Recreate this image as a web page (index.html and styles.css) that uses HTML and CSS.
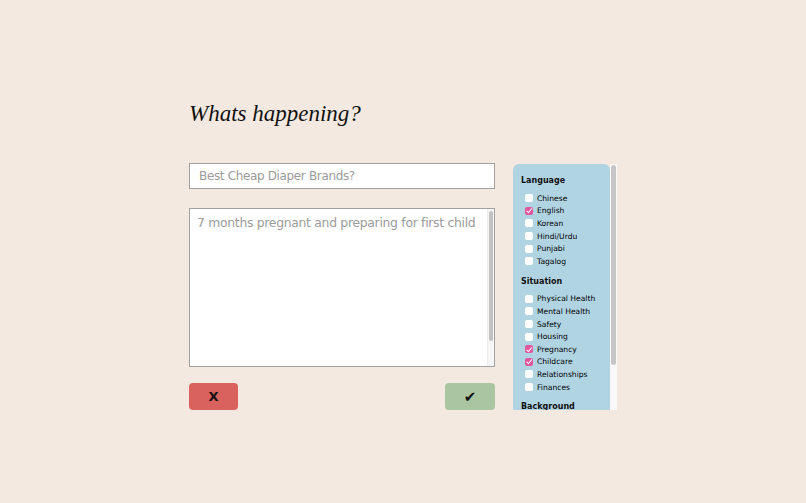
FILE: index.html
```html
<!DOCTYPE html>
<html lang="en">
  <head>
    <meta charset="UTF-8" />
    <meta name="viewport" content="width=device-width, initial-scale=1.0" />
    <title>Whats happening?</title>
    <link rel="stylesheet" href="styles.css">
  </head>
  <body>
    <div class="page">
      <h1 class="title">Whats happening?</h1>
      <div class="row">
        <div class="form">
          <input class="subject" type="text" placeholder="Best Cheap Diaper Brands?" />
          <div class="details-box">
            <textarea class="details" placeholder="7 months pregnant and preparing for first child"></textarea>
            <div class="bar"><div class="thumb"></div></div>
          </div>
          <div class="actions">
            <button class="btn cancel">X</button>
            <button class="btn ok">&#10004;</button>
          </div>
        </div>
        <div class="filters">
          <div class="panel">
            <div class="group-title">Language</div>
            <label class="opt"><input type="checkbox" />Chinese</label>
            <label class="opt"><input type="checkbox" checked />English</label>
            <label class="opt"><input type="checkbox" />Korean</label>
            <label class="opt"><input type="checkbox" />Hindi/Urdu</label>
            <label class="opt"><input type="checkbox" />Punjabi</label>
            <label class="opt"><input type="checkbox" />Tagalog</label>

            <div class="group-title">Situation</div>
            <label class="opt"><input type="checkbox" />Physical Health</label>
            <label class="opt"><input type="checkbox" />Mental Health</label>
            <label class="opt"><input type="checkbox" />Safety</label>
            <label class="opt"><input type="checkbox" />Housing</label>
            <label class="opt"><input type="checkbox" checked />Pregnancy</label>
            <label class="opt"><input type="checkbox" checked />Childcare</label>
            <label class="opt"><input type="checkbox" />Relationships</label>
            <label class="opt"><input type="checkbox" />Finances</label>

            <div class="group-title">Background</div>
          </div>
          <div class="bar side"><div class="thumb"></div></div>
        </div>
      </div>
    </div>
  </body>
</html>
```

FILE: styles.css
```css
:root {
  --fondo: #f4e9e0;
  --panel: #b1d4e3;
  --rosa: #e2559f;
  --borde: #a3a09e;
}

body {
  margin: 0;
  background-color: var(--fondo);
  font-family: "DejaVu Sans", Verdana, sans-serif;
  height: 100vh;
}

.page {
  width: 428px;
  margin: 0 auto;
  padding-top: 100px;
}

.title {
  margin: 0 0 35px 0;
  font-family: "Liberation Serif", "Times New Roman", serif;
  font-style: italic;
  font-weight: normal;
  font-size: 23px;
  line-height: 28px;
  color: #111;
}

.row {
  display: flex;
  gap: 18px;
  align-items: flex-start;
}

.form {
  width: 306px;
  display: flex;
  flex-direction: column;
}

.subject {
  box-sizing: border-box;
  height: 26px;
  width: 100%;
  margin: 0;
  padding: 0 9px;
  border: 1px solid var(--borde);
  background: #fff;
  font-family: inherit;
  font-size: 12px;
  letter-spacing: -0.35px;
  color: #555;
  outline: none;
}

.details-box {
  box-sizing: border-box;
  height: 159px;
  margin-top: 19px;
  display: flex;
  border: 1px solid var(--borde);
  background: #fff;
}
.details {
  flex: 1;
  margin: 0;
  padding: 6px 7px;
  border: none;
  background: transparent;
  font-family: inherit;
  font-size: 12.4px;
  letter-spacing: -0.3px;
  line-height: 16px;
  color: #555;
  resize: none;
  overflow: hidden;
  outline: none;
}
.subject::placeholder,
.details::placeholder {
  color: #9b9b9b;
}

.bar {
  width: 7px;
  flex-shrink: 0;
  background: #f6f6f6;
  border-left: 1px solid #ededed;
  padding: 2px 1px 0 1px;
  box-sizing: border-box;
}
.thumb {
  height: 130px;
  border-radius: 3px;
  background: #c2c2c2;
}

.actions {
  display: flex;
  justify-content: space-between;
  margin-top: 16px;
}

.btn {
  height: 27px;
  border: none;
  border-radius: 4px;
  font-family: inherit;
  font-weight: bold;
  font-size: 13px;
  color: #111;
  padding: 0;
}
.cancel {
  width: 49px;
  background-color: #d9625e;
}
.ok {
  width: 50px;
  background-color: #a9c6a0;
  font-size: 15px;
}

.filters {
  width: 104px;
  height: 246px;
  margin-top: 1px;
  display: flex;
  overflow: hidden;
}
.bar.side {
  background: #f9f9f9;
  border-left: none;
  padding: 1px 1px 0 1px;
}
.bar.side .thumb {
  height: 200px;
  background: #c6c6c6;
}

.panel {
  flex: 1;
  background-color: var(--panel);
  border-radius: 6px 6px 0 0;
  padding: 12px 0 8px 8px;
  overflow: hidden;
}

.group-title {
  font-weight: bold;
  font-size: 8px;
  line-height: 10px;
  color: #111;
  margin-bottom: 6px;
}
.opt + .group-title {
  margin-top: 9px;
}

.opt {
  display: flex;
  align-items: center;
  height: 12.6px;
  padding-left: 4px;
  font-size: 7.6px;
  color: #000;
}
.opt input {
  appearance: none;
  -webkit-appearance: none;
  position: relative;
  width: 8px;
  height: 8px;
  margin: 0 4px 0 0;
  border-radius: 2px;
  background: #fff;
}
.opt input:checked {
  background: var(--rosa);
}
.opt input:checked::after {
  content: "";
  position: absolute;
  left: 2.5px;
  top: 0.5px;
  width: 2px;
  height: 4.5px;
  border: solid #fff;
  border-width: 0 1.3px 1.3px 0;
  transform: rotate(40deg);
}
```
